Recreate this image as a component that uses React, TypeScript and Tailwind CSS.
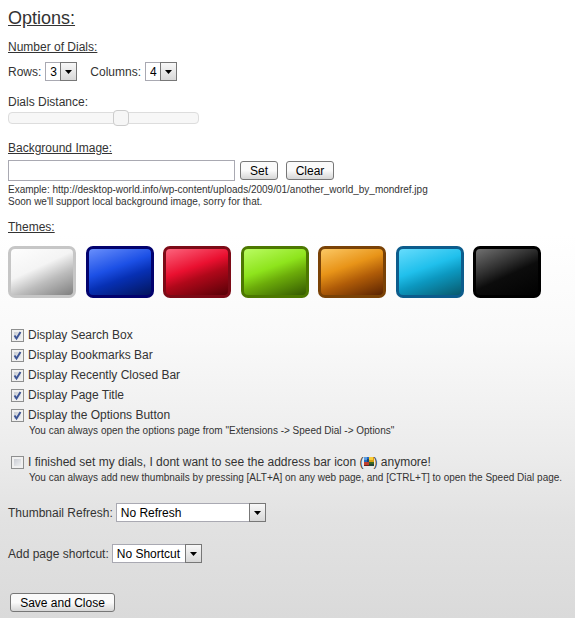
import { useState } from "react";
import type { ReactNode } from "react";
import clsx from "clsx";

const THEMES = [
  {
    name: "White",
    className:
      "border-[#c6c6c6] bg-[linear-gradient(155deg,#ffffff_0%,#f4f4f4_42%,#bcbcbc_64%,#747474_100%)]",
  },
  {
    name: "Blue",
    className:
      "border-[#02026e] bg-[linear-gradient(160deg,#7498ff_0%,#1c50e6_42%,#0730b4_60%,#02104e_100%)]",
  },
  {
    name: "Red",
    className:
      "border-[#7c0a16] bg-[linear-gradient(160deg,#ff7088_0%,#ea1030_42%,#b0081a_58%,#4a0004_100%)]",
  },
  {
    name: "Green",
    className:
      "border-[#4c7800] bg-[linear-gradient(160deg,#c0ff6c_0%,#8ee41c_42%,#6cac0a_60%,#2c4c00_100%)]",
  },
  {
    name: "Orange",
    className:
      "border-[#7a4206] bg-[linear-gradient(160deg,#ffd070_0%,#e89418_40%,#b05c08_62%,#4c1a00_100%)]",
  },
  {
    name: "Cyan",
    className:
      "border-[#0c5c8c] bg-[linear-gradient(160deg,#70e0ff_0%,#20c0ec_42%,#0c98c0_60%,#085060_100%)]",
  },
  {
    name: "Black",
    className:
      "border-black bg-[linear-gradient(155deg,#7c7c7c_0%,#303030_38%,#0c0c0c_55%,#000000_100%)]",
  },
];

const DISPLAY_OPTIONS = [
  "Display Search Box",
  "Display Bookmarks Bar",
  "Display Recently Closed Bar",
  "Display Page Title",
  "Display the Options Button",
];

function SectionTitle({ children }: { children: ReactNode }) {
  return <h2 className="leading-4 underline">{children}</h2>;
}

function Select({
  id,
  options,
  value,
  className,
}: {
  id: string;
  options: string[];
  value: string;
  className: string;
}) {
  return (
    <div className={clsx("relative h-[19px]", className)}>
      <select
        id={id}
        defaultValue={value}
        className="block h-full w-full appearance-none border border-[#a9a9b2] bg-white pr-4 pl-1 text-xs text-black"
      >
        {options.map((option) => (
          <option key={option}>{option}</option>
        ))}
      </select>
      <span className="pointer-events-none absolute inset-y-0 right-0 flex w-[17px] items-center justify-center border border-[#777] bg-linear-to-b from-[#f8f8f8] to-[#d8d8d8]">
        <svg width="7" height="4" viewBox="0 0 7 4">
          <path d="M0 0h7L3.500 4z" fill="#000" />
        </svg>
      </span>
    </div>
  );
}

function Button({ children, className }: { children: ReactNode; className: string }) {
  return (
    <button
      type="button"
      className={clsx(
        "h-[19px] rounded-[3px] border border-[#777] bg-linear-to-b from-[#fafafa] from-50% to-[#d6d6d6] text-xs leading-4 text-black",
        className,
      )}
    >
      {children}
    </button>
  );
}

function Checkbox({ defaultChecked, children }: { defaultChecked?: boolean; children: ReactNode }) {
  return (
    <label className="flex h-5 items-center">
      <span className="relative mr-1 size-[13px]">
        <input
          type="checkbox"
          defaultChecked={defaultChecked}
          className="peer block size-[13px] appearance-none border border-[#8e8f8f] bg-linear-to-br from-[#c0c4cc] to-[#f8f8f8] shadow-[inset_0_0_0_2px_#f0f0f0]"
        />
        <svg
          viewBox="0 0 13 13"
          className="pointer-events-none absolute inset-0 hidden size-[13px] peer-checked:block"
        >
          <path d="M3.500 6.500L5.500 9.500L9.500 3" fill="none" stroke="#3c5494" strokeWidth="1.900" />
        </svg>
      </span>
      <span className="flex items-center">{children}</span>
    </label>
  );
}

function SpeedDialIcon() {
  return (
    <svg width="10" height="10" viewBox="0 0 10 10">
      <path d="M0 0h5v5H0z" fill="#2468bc" />
      <path d="M5 0h5v5H5z" fill="#d8a010" />
      <path d="M0 5h5v4H0z" fill="#c04030" />
      <path d="M5 5h5v4H5z" fill="#3c6820" />
      <path d="M0 0h3v3H0z" fill="#5c9ce0" />
      <path d="M5 0h4v3H5z" fill="#f8cc38" />
      <path d="M3 2h2v3H3zM5 7h5v2H5z" fill="#103048" opacity=".6" />
      <path d="M0 8h5v1H0z" fill="#702018" />
    </svg>
  );
}

export default function App() {
  const [theme, setTheme] = useState("White");

  return (
    <main className="min-h-screen bg-[linear-gradient(#ffffff_38%,#f9f9f9_55%,#ebebeb_74%,#e2e2e2_84%,#dadada_100%)] px-2 pt-2 pb-[6px] font-['Liberation_Sans',Arial,sans-serif] text-xs text-[#333]">
      <h1 className="text-lg leading-5 underline">Options:</h1>

      <section className="mt-[11px]">
        <SectionTitle>Number of Dials:</SectionTitle>
        <div className="mt-[7px] flex items-center">
          <label htmlFor="rows">Rows:</label>
          <Select id="rows" options={["2", "3", "4", "5"]} value="3" className="ml-1 w-8" />
          <label htmlFor="columns" className="ml-[13px]">
            Columns:
          </label>
          <Select id="columns" options={["2", "3", "4", "5"]} value="4" className="ml-1 w-8" />
        </div>
      </section>

      <section className="mt-[13px]">
        <label htmlFor="distance" className="block leading-4">
          Dials Distance:
        </label>
        <input
          id="distance"
          type="range"
          defaultValue={60}
          className="block h-4 w-[191px] appearance-none bg-transparent [&::-webkit-slider-runnable-track]:h-3 [&::-webkit-slider-runnable-track]:rounded [&::-webkit-slider-runnable-track]:border [&::-webkit-slider-runnable-track]:border-[#ddd] [&::-webkit-slider-runnable-track]:bg-[#f7f7f7] [&::-webkit-slider-thumb]:-mt-[3px] [&::-webkit-slider-thumb]:size-4 [&::-webkit-slider-thumb]:appearance-none [&::-webkit-slider-thumb]:rounded [&::-webkit-slider-thumb]:border [&::-webkit-slider-thumb]:border-[#ccc] [&::-webkit-slider-thumb]:bg-[#f6f6f6]"
        />
      </section>

      <section className="mt-[14px]">
        <SectionTitle>
          <label htmlFor="background">Background Image:</label>
        </SectionTitle>
        <div className="mt-1 flex items-center">
          <input
            id="background"
            type="text"
            className="h-[21px] w-[227px] border border-[#a9a9b2] bg-white px-1 text-black"
          />
          <Button className="ml-[5px] w-[38px]">Set</Button>
          <Button className="ml-2 w-12">Clear</Button>
        </div>
        <div className="mt-[3px] text-[10px] leading-3">
          <p>
            Example: http://desktop-world.info/wp-content/uploads/2009/01/another_world_by_mondref.jpg
          </p>
          <p>Soon we'll support local background image, sorry for that.</p>
        </div>
      </section>

      <section className="mt-[11px]">
        <SectionTitle>Themes:</SectionTitle>
        <div className="mt-[11px] flex w-[533px] max-w-full justify-between">
          {THEMES.map(({ name, className }) => (
            <button
              key={name}
              type="button"
              aria-label={name}
              aria-pressed={theme === name}
              onClick={() => setTheme(name)}
              className={clsx("h-[52px] w-[68px] rounded-[7px] border-3 bg-origin-border", className)}
            />
          ))}
        </div>
      </section>

      <section className="mt-[27px] ml-[3px]">
        {DISPLAY_OPTIONS.map((option) => (
          <Checkbox key={option} defaultChecked>
            {option}
          </Checkbox>
        ))}
        <p className="ml-[18px] text-[10px] leading-3">
          You can always open the options page from "Extensions -&gt; Speed Dial -&gt; Options"
        </p>
      </section>

      <section className="mt-[15px] ml-[3px]">
        <Checkbox>
          I finished set my dials, I dont want to see the address bar icon (<SpeedDialIcon />) anymore!
        </Checkbox>
        <p className="ml-[18px] text-[10px] leading-3">
          You can always add new thumbnails by pressing [ALT+A] on any web page, and [CTRL+T] to open
          the Speed Dial page.
        </p>
      </section>

      <div className="mt-[19px] flex items-center">
        <label htmlFor="refresh">Thumbnail Refresh:</label>
        <Select
          id="refresh"
          options={["No Refresh", "Every day", "Every week"]}
          value="No Refresh"
          className="ml-[3px] w-[150px]"
        />
      </div>

      <div className="mt-[22px] flex items-center">
        <label htmlFor="shortcut">Add page shortcut:</label>
        <Select
          id="shortcut"
          options={["No Shortcut", "ALT+A", "ALT+S"]}
          value="No Shortcut"
          className="ml-[3px] w-[90px]"
        />
      </div>

      <Button className="mt-[30px] ml-[2px] w-[105px]">Save and Close</Button>
    </main>
  );
}
